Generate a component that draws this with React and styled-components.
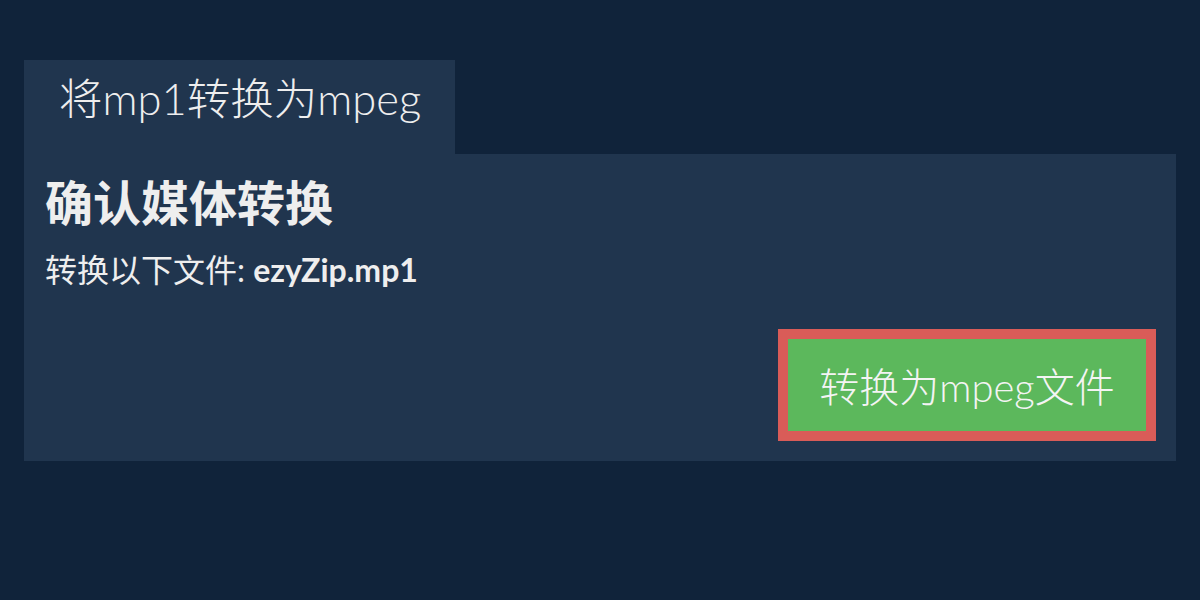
import React from "react";
import styled, { createGlobalStyle } from "styled-components";

const Global = createGlobalStyle`
  html, body {
    margin: 0;
    padding: 0;
    background: #10233a;
  }
  body {
    font-family: Lato, "Noto Sans CJK SC", sans-serif;
    color: #eeeeee;
  }
`;

const Page = styled.div`
  width: 1200px;
  height: 600px;
  box-sizing: border-box;
  padding: 60px 24px 0;
  background: #10233a;
`;

const Tab = styled.div`
  display: inline-flex;
  align-items: center;
  height: 94px;
  box-sizing: border-box;
  padding: 0 34px 16px 35px;
  background: #20354e;
  font-size: 43.5px;
  line-height: 1;
  font-weight: 300;
  color: #eeeeee;
`;

const Panel = styled.div`
  display: flex;
  flex-direction: column;
  height: 307px;
  box-sizing: border-box;
  padding: 17px 20px 20px 21px;
  background: #20354e;
`;

const Title = styled.h1`
  margin: 0;
  font-size: 48px;
  font-weight: 700;
  line-height: 64px;
  color: #eeeeee;
`;

const Sub = styled.p`
  margin: 15px 0 0;
  font-size: 32px;
  line-height: 40px;
  font-weight: 400;
  color: #eeeeee;
`;

const FileName = styled.strong`
  font-weight: 700;
`;

const Actions = styled.div`
  margin-top: auto;
  display: flex;
  justify-content: flex-end;
`;

const ConvertButton = styled.button`
  width: 378px;
  height: 112px;
  box-sizing: border-box;
  border: 10px solid #d95c58;
  background: #5cb85c;
  color: #f4f4f4;
  font-family: Lato, "Noto Sans CJK SC", sans-serif;
  font-size: 40px;
  font-weight: 300;
  padding: 0;
  cursor: pointer;
`;

export default function App() {
  return (
    <>
      <Global />
      <Page>
        <Tab>将mp1转换为mpeg</Tab>
        <Panel>
          <Title>确认媒体转换</Title>
          <Sub>
            转换以下文件: <FileName>ezyZip.mp1</FileName>
          </Sub>
          <Actions>
            <ConvertButton>转换为mpeg文件</ConvertButton>
          </Actions>
        </Panel>
      </Page>
    </>
  );
}
